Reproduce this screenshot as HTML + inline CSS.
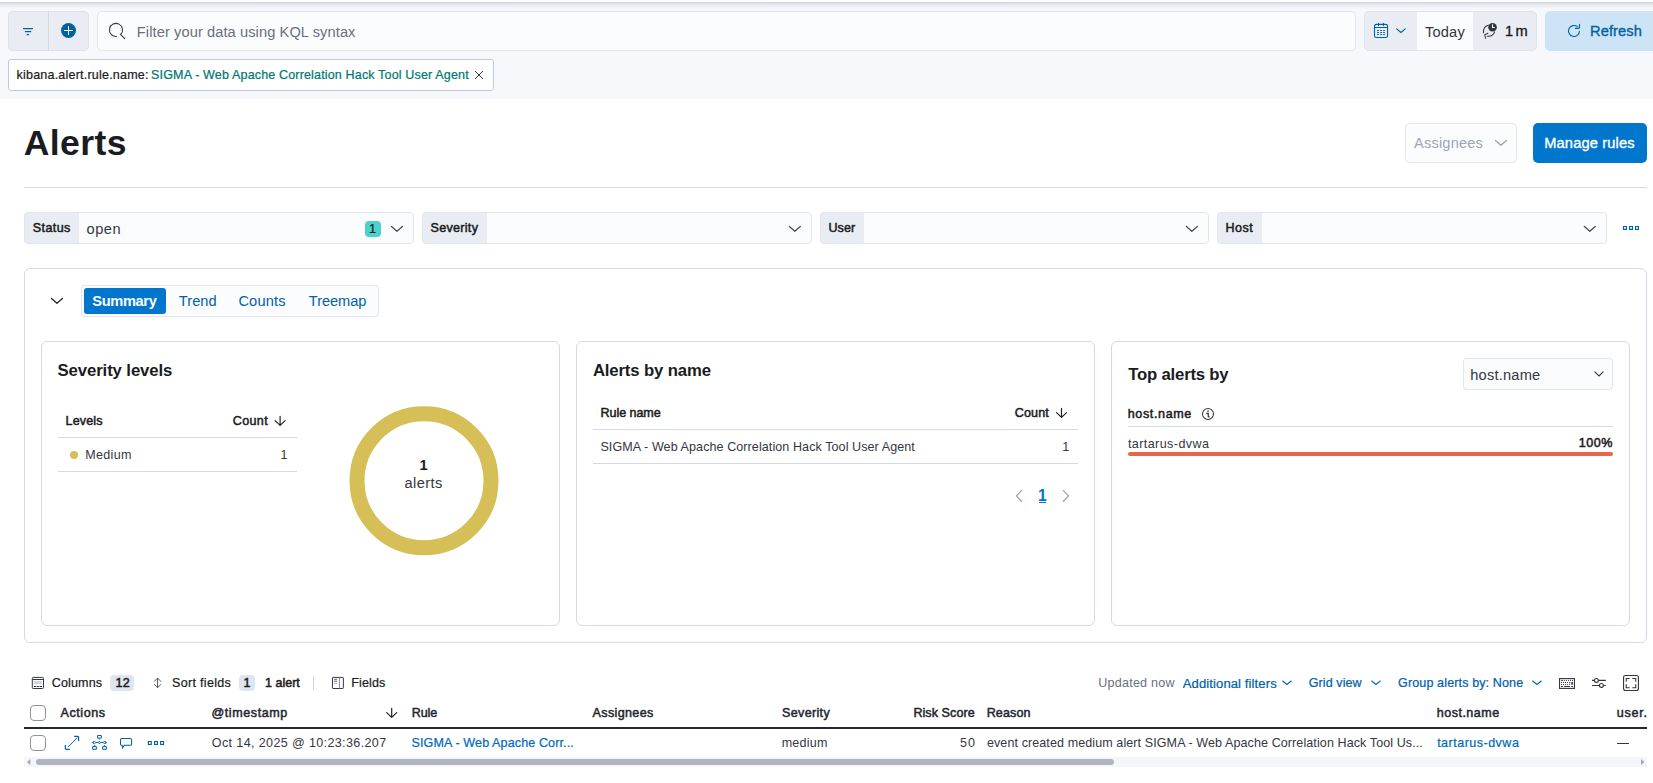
<!DOCTYPE html>
<html lang="en">
<head>
<meta charset="utf-8">
<title>Alerts</title>
<style>
*{box-sizing:border-box;margin:0;padding:0}
html,body{width:1653px;height:783px;overflow:hidden;background:#fff}
body{font-family:"Liberation Sans",sans-serif;color:#1d2a3e;position:relative;font-size:14px}
.a{position:absolute}
.t{position:absolute;white-space:nowrap;line-height:1}
.b{font-weight:700}
.m{-webkit-text-stroke:0.22px currentColor}
.s{-webkit-text-stroke:0.5px currentColor}
svg{position:absolute;overflow:visible;fill:none}
.ctl{position:absolute;height:32px;top:212px;background:#fbfcfd;border-radius:4px;overflow:hidden}
.ctl:after{content:"";position:absolute;left:0;top:0;right:0;bottom:0;border-radius:4px;border:1px solid #e2e5eb}
.ctl i{position:absolute;left:0;top:0;bottom:0;background:#e9edf3}
.card{position:absolute;top:341px;height:285px;background:#fff;border:1px solid #d3dae6;border-radius:6px}
.ln{position:absolute;height:1px;background:#d3dae6}
.cb{position:absolute;width:16px;height:16px;border:1px solid #8f939c;border-radius:4px;background:#fff}
.bdg{position:absolute;background:#e0e5ee;border-radius:4px}
</style>
</head>
<body>
<!-- TOP BAR -->
<div class="a" id="topbar" style="left:0;top:0;width:1653px;height:99px;background:#f7f8fc"></div>
<div class="a" id="topshadow" style="left:0;top:0;width:1653px;height:9px;background:linear-gradient(#fff 0,#fff 2px,#cfd5e3 2px,#cfd5e3 3px,#dbdde3 3px,#e9ebf0 5px,#f7f8fc 9px)"></div>

<!-- filter buttons -->
<div class="a" id="fbtn" style="left:8px;top:11px;width:81px;height:40px;background:#e9edf3;box-shadow:inset 0 0 0 1px #dde1ea;border-radius:5px"></div>
<div class="a" style="left:48px;top:11px;width:1px;height:40px;background:#d1d8e7"></div>
<svg id="i_filter" style="left:20px;top:23px" width="16" height="16" viewBox="0 0 16 16"><path d="M3 5.65h10M4.9 8.65h6.3M6.7 11.6h2.4" stroke="#0061a6" stroke-width="1.1"/></svg>
<svg id="i_plus" style="left:61px;top:23px" width="15" height="15" viewBox="0 0 15 15"><circle cx="7.5" cy="7.5" r="7.5" fill="#0061a6"/><path d="M3 7.5h9M7.5 3v9" stroke="#fff" stroke-width="1"/></svg>
<!-- search -->
<div class="a" id="search" style="left:97px;top:11px;width:1259px;height:40px;background:#fbfcfd;box-shadow:inset 0 0 0 1px #e2e5eb;border-radius:5px"></div>

<!-- date picker -->
<div class="a" id="dp" style="left:1364px;top:11px;width:173px;height:40px;background:#e9edf3;box-shadow:inset 0 0 0 1px #dfe3ea;border-radius:5px"></div>
<div class="a" style="left:1417px;top:12px;width:56px;height:38px;background:#fbfcfd"></div>
<svg id="i_cal" style="left:0;top:0" width="1653" height="60" viewBox="0 0 1653 60" stroke="#0061a6" stroke-width="1.100" stroke-linecap="round"><rect x="1374.520" y="24.380" width="13.020" height="13.150" rx="1.900"/><path d="M1374.600 27.500h12.900M1378.500 23.300v2.200M1383.500 23.300v2.200"/><path d="M1377 30.500h1.900M1380.100 30.500h1.900M1383.050 30.500h1.900M1377 32.500h1.900M1380.100 32.500h1.900M1383.050 32.500h1.900M1377 34.550h1.900M1380.100 34.550h1.900M1383.050 34.550h1.900" stroke-width="0.950" stroke-linecap="butt"/><path d="M1396.650 28.850L1400.950 32.450L1405.250 28.850" stroke-width="1.150"/></svg>
<svg id="i_time" style="left:0;top:0" width="1653" height="60" viewBox="0 0 1653 60" stroke="#30343f" stroke-width="1.050" stroke-linecap="round"><path d="M1488.300 25.200C1485 26 1483.200 29 1483.500 32.700M1494.500 31.900C1493.800 34.500 1491 36.600 1487.300 36.300M1487.900 33.300L1484.700 34.800L1485.600 38.300"/><circle cx="1492.550" cy="27.200" r="4.300" fill="#30343f" stroke="none"/><path d="M1492.500 24.300V27.450H1494.800" stroke="#fff" stroke-width="1.050" stroke-linecap="butt"/></svg>
<!-- refresh -->
<div class="a" id="refresh" style="left:1545px;top:11px;width:120px;height:40px;background:#cce4f5;border-radius:5px"></div>
<svg id="i_refresh" style="left:0;top:0" width="1653" height="60" viewBox="0 0 1653 60" stroke="#0061a6" stroke-width="1.100" stroke-linecap="round"><path d="M1577.300 26.550A5.500 5.500 0 1 0 1579.500 31.300M1579.500 24.300V27.600a0.800 0.800 0 0 1-0.800 0.800H1575.400"/></svg>

<!-- filter pill -->
<div class="a" id="pill" style="left:8px;top:59px;width:486px;height:32px;background:#fff;border:1px solid #c2cad9;border-radius:3px"></div>
<svg id="i_pillx" style="left:474px;top:70px" width="10" height="10" viewBox="0 0 10 10"><path d="M1 1l8 8M9 1l-8 8" stroke="#343741" stroke-width="1"/></svg>

<!-- TITLE ROW -->
<div class="a" id="assignees" style="left:1405px;top:123px;width:112px;height:40px;background:#fbfcfd;box-shadow:inset 0 0 0 1px #e3e6ec;border-radius:5px"></div>
<div class="a" id="manage" style="left:1533px;top:123px;width:114px;height:40px;background:#0077cc;border-radius:5px"></div>
<div class="a" id="hr" style="left:24px;top:187px;width:1623px;height:1px;background:#d3dae6"></div>

<!-- CONTROLS -->
<div class="ctl" id="c_status" style="left:24px;width:390px"><i style="width:55px"></i></div>
<div class="ctl" id="c_sev" style="left:422px;width:390px"><i style="width:65px"></i></div>
<div class="ctl" id="c_user" style="left:820px;width:389px"><i style="width:44px"></i></div>
<div class="ctl" id="c_host" style="left:1217px;width:390px"><i style="width:45px"></i></div>
<div class="a" id="b_status" style="left:365px;top:221px;width:16px;height:16px;background:#4dd2ca;border-radius:4px"></div>

<!-- PANEL -->

<div class="a" id="panel" style="left:24px;top:268px;width:1623px;height:375px;background:#fff;border:1px solid #d3dae6;border-radius:6px"></div>
<div class="a" id="tabs" style="left:81px;top:285px;width:298px;height:32px;background:#fbfcfd;box-shadow:inset 0 0 0 1px #e3e6ec;border-radius:4px"></div>
<div class="a" id="tab_sum" style="left:84px;top:288px;width:82px;height:26px;background:#0077cc;border-radius:3px"></div>

<div class="card" id="card1" style="left:41px;width:519px"></div>
<div class="card" id="card2" style="left:576px;width:519px"></div>
<div class="card" id="card3" style="left:1111px;width:519px"></div>

<!-- card 1 -->
<div class="ln" style="left:58px;top:437px;width:239px"></div>
<div class="ln" style="left:58px;top:471px;width:239px"></div>
<div class="a" id="dot" style="left:69.5px;top:450.8px;width:8.5px;height:8.5px;border-radius:50%;background:#d6bf57"></div>
<svg id="donut" style="left:349px;top:406px" width="150" height="150" viewBox="0 0 150 150"><circle cx="75" cy="74.8" r="67" stroke="#d6bf57" stroke-width="15"/></svg>

<!-- card 2 -->
<div class="ln" style="left:593px;top:429px;width:485px"></div>
<div class="ln" style="left:593px;top:463px;width:485px"></div>
<div class="a" style="left:1039px;top:502px;width:7px;height:1px;background:#0077cc"></div>

<!-- card 3 -->
<div class="a" id="hostsel" style="left:1463px;top:358px;width:150px;height:32px;background:#fbfcfd;box-shadow:inset 0 0 0 1px #e3e6ec;border-radius:4px"></div>
<svg style="left:1593.5px;top:371px" width="10" height="6" viewBox="0 0 10 6"><path d="M0.6 0.7L5 4.9L9.4 0.7" stroke="#343741" stroke-width="1.15"/></svg>
<div class="ln" style="left:1128px;top:426px;width:485px"></div>
<div class="a" id="redbar" style="left:1128px;top:452px;width:485px;height:4px;border-radius:2px;background:#e7664c"></div>

<!-- TOOLBAR -->
<div class="bdg" style="left:110px;top:675px;width:24px;height:16px"></div>
<div class="bdg" style="left:239px;top:675px;width:16px;height:16px"></div>
<div class="a" style="left:313px;top:676px;width:1px;height:14px;background:#cfd7e6"></div>

<svg id="ov_tb" style="left:0;top:0" width="1653" height="783" viewBox="0 0 1653 783" stroke="#343741" stroke-width="1">
<rect x="32.300" y="677.400" width="11.200" height="11.100" rx="0.900"/>
<path d="M32.300 679.500h11.200"/>
<rect x="33.900" y="681.100" width="8" height="3" fill="#c9ced7" stroke="none"/>
<path d="M34 682.600h7.800" stroke="#e4e7ec" stroke-width="0.600"/>
<path d="M34 686.500h8" stroke-dasharray="2.300 0.550"/>
<path d="M157.600 678.300v9.200M154.100 681.600L157.600 678.100L161.100 681.600M154.100 684.200L157.600 687.700L161.100 684.200" stroke="#3d424d" stroke-width="0.900"/>
<rect x="332.450" y="677.400" width="10.900" height="11.100" rx="0.600"/>
<path d="M339.500 677.400v11.100" stroke="#8b909a" stroke-width="1.100"/>
<path d="M334.100 679.300h2.900M334.100 681.200h2.900" stroke-width="0.800"/>
<path d="M334.100 683.400h2.900" stroke="#9a9fa9" stroke-width="0.800"/>
</svg>
<svg id="i_tbr" style="left:0;top:0" width="1653" height="783" viewBox="0 0 1653 783" stroke="#343741" stroke-width="1.100">
<rect x="1559.550" y="678.600" width="14.900" height="9.800"/>
<path d="M1561.100 680.400h1.900M1563.90 680.40h1M1565.90 680.40h1M1568.00 680.40h1M1570.00 680.40h1M1572.00 680.40h1M1561.00 682.50h1M1563.00 682.50h1M1565.00 682.50h1M1567.10 682.50h1M1569.10 682.50h1M1561.00 684.60h1M1563.00 684.60h1M1565.00 684.60h1M1567.10 684.60h1M1569.10 684.60h1M1561.100 686.500h1.900M1564.100 686.500h5.900M1571.250 686.500h1.750" stroke-width="1"/>
<path d="M1572.100 682v2.750" stroke-width="1.600"/>
<path d="M1592 680.400h2.400M1598.400 680.400h7.450M1592 685.450h7.400M1603.400 685.450h2.450"/>
<circle cx="1596.400" cy="680.400" r="1.950"/><circle cx="1601.400" cy="685.450" r="1.950"/>
<rect x="1623.550" y="675.450" width="14.900" height="15.050" rx="2"/>
<path d="M1626.200 681.800V678.500H1629.700M1632.300 678.500H1635.750V681.800M1626.200 684.200V687.700H1629.700M1632.300 687.700H1635.750V684.200"/>
</svg>
<!-- TABLE -->
<div class="cb" style="left:30px;top:705px"></div>
<div class="a" id="thick" style="left:24px;top:727px;width:1622.5px;height:2px;background:#252933"></div>
<div class="cb" style="left:30px;top:735px"></div>
<svg id="ov_row" style="left:0;top:0" width="1653" height="783" viewBox="0 0 1653 783" stroke="#0061a6" stroke-width="1.1">
<path d="M74.100 736.400h3.600a0.900 0.900 0 0 1 0.900 0.900v3.600M65.300 744.900v3.600a0.900 0.900 0 0 0 0.900 0.900h3.600" stroke-width="1.2"/>
<path d="M68 747.100L77.400 737.600" stroke-width="0.950"/>
<rect x="97.500" y="735.500" width="3.900" height="2.600" rx="0.150" stroke-width="1"/>
<path d="M98.600 738.500L99.450 739.800L100.300 738.500z" fill="#0061a6" stroke="none"/>
<path d="M92.600 742.500H106.300M93.700 741.200L92.400 742.500L93.700 743.800M105.200 741.200L106.500 742.500L105.200 743.800" stroke-width="1"/>
<path d="M93.200 742.500L94.500 741.200L95.800 742.500L94.500 743.800zM98.100 742.500L99.400 741.200L100.700 742.500L99.400 743.800zM103 742.500L104.300 741.200L105.600 742.500L104.300 743.800z" fill="#fff" stroke-width="0.900"/>
<rect x="92.600" y="746.600" width="3.800" height="2.700" rx="0.150" stroke-width="1"/>
<rect x="102.600" y="746.600" width="3.800" height="2.700" rx="0.150" stroke-width="1"/>
<path d="M94.500 745.200v1.200M104.450 745.200v1.200" stroke-width="1.300"/>
<path d="M121.900 738.500h8.300a1.400 1.400 0 0 1 1.400 1.400v4a1.400 1.400 0 0 1-1.400 1.400h-5.900l-1.700 2.500l-0.500-2.500h-0.200a1.400 1.400 0 0 1-1.400-1.400v-4a1.400 1.400 0 0 1 1.400-1.400z" stroke-width="1.050"/>
<path d="M148.400 741.500h2.800v3h-2.800zM154.600 741.500h2.800v3h-2.800zM160.700 741.500h2.800v3h-2.800z" stroke-width="1.200"/>
</svg>
<div class="a" style="left:1617px;top:743px;width:12px;height:1px;background:#343741"></div>
<!-- scrollbar -->
<div class="a" id="sbtrack" style="left:24px;top:757px;width:1622.5px;height:10px;background:#f5f6fa"></div>
<div class="a" id="sbthumb" style="left:36px;top:759px;width:1078px;height:6px;border-radius:3px;background:#b0b5c0"></div>
<svg style="left:26.800px;top:759px" width="4" height="6" viewBox="0 0 4 6"><path d="M3.400 0L0 3l3.400 3z" fill="#a3a8b3"/></svg>
<svg style="left:1640.800px;top:759px" width="4" height="6" viewBox="0 0 4 6"><path d="M0 0l3.400 3L0 6z" fill="#a3a8b3"/></svg>

<svg id="ov_chev" style="left:0;top:0" width="1653" height="783" viewBox="0 0 1653 783" stroke-linecap="round" stroke-linejoin="round">
<path d="M116.60 36.48A6.55 6.55 0 1 1 120.80 34.42M120.40 34.40L124.70 38.60" stroke="#343741" stroke-width="1.050"/>
<path d="M1623.45 226.5h2.95v2.9h-2.95zM1629.50 226.5h2.95v2.9h-2.95zM1635.50 226.5h2.95v2.9h-2.95z" stroke="#0061a6" stroke-width="1.100" stroke-linejoin="miter"/>
<circle cx="1208" cy="413.900" r="5.500" stroke="#343741" stroke-width="1.050"/><path d="M1207.200 411.200h1.700M1206.200 413.400h2.050v3.100l1.250 0.600" stroke="#343741" stroke-width="1.250" stroke-linecap="butt" stroke-linejoin="miter"/>
<path d="M1021.40 490.60L1016.45 495.92L1021.40 501.25M1063.40 490.60L1068.55 495.92L1063.40 501.25" stroke="#98a2b3" stroke-width="1.300"/>
<path d="M1061.50 408.30V417.10M1056.50 412.70L1061.50 417.30L1066.50 412.70M280.10 416.30V425.10M275.10 420.70L280.10 425.30L285.10 420.70M391.70 708.30V717.10M386.70 712.70L391.70 717.30L396.70 712.70" stroke="#1a1c21" stroke-width="1.150"/>
<path d="M1495.50 140.50L1500.95 145.30L1506.40 140.50" stroke="#98a2b3" stroke-width="1.250"/>
<path d="M391.50 226.50L396.95 231.30L402.40 226.50M789.35 226.50L794.80 231.30L800.25 226.50M1186.40 226.50L1191.85 231.30L1197.30 226.50M1584.35 226.50L1589.80 231.30L1595.25 226.50" stroke="#474d5a" stroke-width="1.250"/>
<path d="M51.50 298.50L56.95 303.30L62.40 298.50" stroke="#252933" stroke-width="1.350"/>
<path d="M1282.65 681.00L1286.95 684.45L1291.25 681.00M1371.65 681.00L1375.95 684.45L1380.25 681.00M1532.65 681.00L1536.95 684.45L1541.25 681.00" stroke="#006bb8" stroke-width="1.150"/>
</svg>
<span class="t" id="t_search" style="left:136.84px;top:25px;font-size:14.63px;color:#69707d;letter-spacing:0.091px;">Filter your data using KQL syntax</span>
<span class="t" id="t_today" style="left:1424.91px;top:25px;font-size:14.63px;color:#343741;letter-spacing:0.195px;">Today</span>
<span class="t m" id="t_1m" style="left:1504.92px;top:24px;font-size:14.63px;color:#1a1c21;letter-spacing:-0.769px;-webkit-text-stroke:0.35px currentColor">1 m</span>
<span class="t m" id="t_refresh" style="left:1590.10px;top:24px;font-size:14.63px;color:#0061a6;letter-spacing:0.088px;-webkit-text-stroke:0.35px currentColor">Refresh</span>
<span class="t m" id="t_pillk" style="left:16.55px;top:69px;font-size:12.54px;color:#1a1c21;letter-spacing:0.202px;">kibana.alert.rule.name:</span>
<span class="t m" id="t_pillv" style="left:151.08px;top:69px;font-size:12.54px;color:#007871;letter-spacing:0.148px;">SIGMA - Web Apache Correlation Hack Tool User Agent</span>
<span class="t b" id="t_title" style="left:23.71px;top:126px;font-size:35.53px;color:#1a1c21;letter-spacing:0.427px;">Alerts</span>
<span class="t" id="t_assign" style="left:1414.05px;top:136px;font-size:14.63px;color:#9ca5b6;letter-spacing:0.169px;">Assignees</span>
<span class="t m" id="t_manage" style="left:1544.24px;top:136px;font-size:14.63px;color:#fff;letter-spacing:0.156px;-webkit-text-stroke:0.35px currentColor">Manage rules</span>
<span class="t s" id="t_status" style="left:32.74px;top:222px;font-size:12.54px;color:#1a1c21;letter-spacing:0.402px;">Status</span>
<span class="t" id="t_open" style="left:86.51px;top:222px;font-size:14.63px;color:#343741;letter-spacing:0.541px;">open</span>
<span class="t m" id="t_b1" style="left:369.08px;top:223px;font-size:12.54px;color:#04201f;letter-spacing:0.000px;">1</span>
<span class="t s" id="t_sev" style="left:430.53px;top:222px;font-size:12.54px;color:#1a1c21;letter-spacing:0.302px;">Severity</span>
<span class="t s" id="t_user" style="left:828.45px;top:222px;font-size:12.54px;color:#1a1c21;letter-spacing:0.120px;">User</span>
<span class="t s" id="t_host" style="left:1225.38px;top:222px;font-size:12.54px;color:#1a1c21;letter-spacing:0.495px;">Host</span>
<span class="t b" id="t_summary" style="left:92.22px;top:294px;font-size:14.63px;color:#fff;letter-spacing:-0.338px;">Summary</span>
<span class="t" id="t_trend" style="left:178.82px;top:294px;font-size:14.63px;color:#0061a6;letter-spacing:0.053px;">Trend</span>
<span class="t" id="t_counts" style="left:238.39px;top:294px;font-size:14.63px;color:#0061a6;letter-spacing:0.166px;">Counts</span>
<span class="t" id="t_treemap" style="left:308.82px;top:294px;font-size:14.63px;color:#0061a6;letter-spacing:-0.072px;">Treemap</span>
<span class="t b" id="t_sevlev" style="left:57.52px;top:363px;font-size:16.72px;color:#1a1c21;letter-spacing:-0.090px;">Severity levels</span>
<span class="t b" id="t_abn" style="left:592.88px;top:363px;font-size:16.72px;color:#1a1c21;letter-spacing:-0.126px;">Alerts by name</span>
<span class="t b" id="t_tab" style="left:1128.33px;top:367px;font-size:16.72px;color:#1a1c21;letter-spacing:-0.201px;">Top alerts by</span>
<span class="t" id="t_hostsel" style="left:1470.24px;top:368px;font-size:14.63px;color:#343741;letter-spacing:0.204px;">host.name</span>
<span class="t s" id="t_levels" style="left:65.51px;top:415px;font-size:12.54px;color:#1a1c21;letter-spacing:0.168px;">Levels</span>
<span class="t s" id="t_count1" style="left:232.81px;top:415px;font-size:12.54px;color:#1a1c21;letter-spacing:0.346px;">Count</span>
<span class="t" id="t_medium" style="left:85.21px;top:449px;font-size:12.54px;color:#343741;letter-spacing:0.334px;">Medium</span>
<span class="t" id="t_m1" style="left:280.56px;top:449px;font-size:12.54px;color:#343741;letter-spacing:0.000px;">1</span>
<span class="t b" id="t_d1" style="left:419.52px;top:458px;font-size:14.63px;color:#1a1c21;letter-spacing:0.000px;">1</span>
<span class="t" id="t_dalerts" style="left:404.58px;top:476px;font-size:14.63px;color:#343741;letter-spacing:0.382px;">alerts</span>
<span class="t s" id="t_rulename" style="left:600.51px;top:407px;font-size:12.54px;color:#1a1c21;letter-spacing:-0.058px;">Rule name</span>
<span class="t s" id="t_count2" style="left:1014.75px;top:407px;font-size:12.54px;color:#1a1c21;letter-spacing:0.162px;">Count</span>
<span class="t" id="t_rule" style="left:600.41px;top:441px;font-size:12.54px;color:#343741;letter-spacing:0.085px;">SIGMA - Web Apache Correlation Hack Tool User Agent</span>
<span class="t" id="t_r1" style="left:1062.23px;top:441px;font-size:12.54px;color:#343741;letter-spacing:0.000px;">1</span>
<span class="t b" id="t_p1" style="left:1037.92px;top:488px;font-size:15.67px;color:#0074c8;letter-spacing:0.000px;">1</span>
<span class="t s" id="t_hn" style="left:1127.72px;top:408px;font-size:12.54px;color:#1a1c21;letter-spacing:0.636px;">host.name</span>
<span class="t" id="t_tart" style="left:1127.89px;top:438px;font-size:12.54px;color:#343741;letter-spacing:0.428px;">tartarus-dvwa</span>
<span class="t s" id="t_100" style="left:1578.84px;top:437px;font-size:12.54px;color:#1a1c21;letter-spacing:0.475px;">100%</span>
<span class="t m" id="t_columns" style="left:51.75px;top:677px;font-size:12.54px;color:#1a1c21;letter-spacing:0.140px;">Columns</span>
<span class="t s" id="t_12" style="left:115.49px;top:677px;font-size:12.54px;color:#1a1c21;letter-spacing:0.252px;">12</span>
<span class="t m" id="t_sort" style="left:172.08px;top:677px;font-size:12.54px;color:#1a1c21;letter-spacing:0.308px;">Sort fields</span>
<span class="t s" id="t_s1" style="left:243.60px;top:677px;font-size:12.54px;color:#1a1c21;letter-spacing:0.000px;">1</span>
<span class="t s" id="t_1alert" style="left:265.01px;top:677px;font-size:12.54px;color:#1a1c21;letter-spacing:-0.002px;">1 alert</span>
<span class="t m" id="t_fields" style="left:351.34px;top:677px;font-size:12.54px;color:#1a1c21;letter-spacing:0.116px;">Fields</span>
<span class="t" id="t_updated" style="left:1098.24px;top:677px;font-size:12.54px;color:#69707d;letter-spacing:0.246px;">Updated now</span>
<span class="t m" id="t_addf" style="left:1182.78px;top:677px;font-size:13.06px;color:#0061a6;letter-spacing:0.105px;">Additional filters</span>
<span class="t m" id="t_grid" style="left:1308.75px;top:677px;font-size:12.54px;color:#0061a6;letter-spacing:0.080px;">Grid view</span>
<span class="t m" id="t_group" style="left:1398.05px;top:677px;font-size:12.54px;color:#0061a6;letter-spacing:0.127px;">Group alerts by: None</span>
<span class="t s" id="t_h_actions" style="left:60.61px;top:707px;font-size:12.54px;color:#24272f;letter-spacing:0.548px;">Actions</span>
<span class="t s" id="t_h_ts" style="left:211.51px;top:707px;font-size:12.54px;color:#24272f;letter-spacing:0.584px;">@timestamp</span>
<span class="t s" id="t_h_rule" style="left:411.69px;top:707px;font-size:12.54px;color:#24272f;letter-spacing:-0.047px;">Rule</span>
<span class="t s" id="t_h_assign" style="left:592.61px;top:707px;font-size:12.54px;color:#24272f;letter-spacing:0.356px;">Assignees</span>
<span class="t s" id="t_h_sev" style="left:782.03px;top:707px;font-size:12.54px;color:#24272f;letter-spacing:0.340px;">Severity</span>
<span class="t s" id="t_h_risk" style="left:913.38px;top:707px;font-size:12.54px;color:#24272f;letter-spacing:0.076px;">Risk Score</span>
<span class="t s" id="t_h_reason" style="left:986.69px;top:707px;font-size:12.54px;color:#24272f;letter-spacing:0.126px;">Reason</span>
<span class="t s" id="t_h_host" style="left:1436.78px;top:707px;font-size:12.54px;color:#24272f;letter-spacing:0.482px;">host.name</span>
<span class="t s" id="t_h_user" style="left:1616.84px;top:707px;font-size:12.54px;color:#24272f;letter-spacing:0.744px;">user.</span>
<span class="t" id="t_c_ts" style="left:211.83px;top:737px;font-size:12.54px;color:#343741;letter-spacing:0.374px;">Oct 14, 2025 @ 10:23:36.207</span>
<span class="t m" id="t_c_rule" style="left:411.56px;top:737px;font-size:12.54px;color:#006bb8;letter-spacing:0.118px;">SIGMA - Web Apache Corr...</span>
<span class="t" id="t_c_sev" style="left:781.67px;top:737px;font-size:12.54px;color:#343741;letter-spacing:0.242px;">medium</span>
<span class="t" id="t_c_risk" style="left:959.96px;top:737px;font-size:12.54px;color:#343741;letter-spacing:1.097px;">50</span>
<span class="t" id="t_c_reason" style="left:986.94px;top:737px;font-size:12.54px;color:#343741;letter-spacing:0.092px;">event created medium alert SIGMA - Web Apache Correlation Hack Tool Us...</span>
<span class="t m" id="t_c_host" style="left:1437.15px;top:737px;font-size:12.54px;color:#006bb8;letter-spacing:0.483px;">tartarus-dvwa</span>
</body>
</html>
